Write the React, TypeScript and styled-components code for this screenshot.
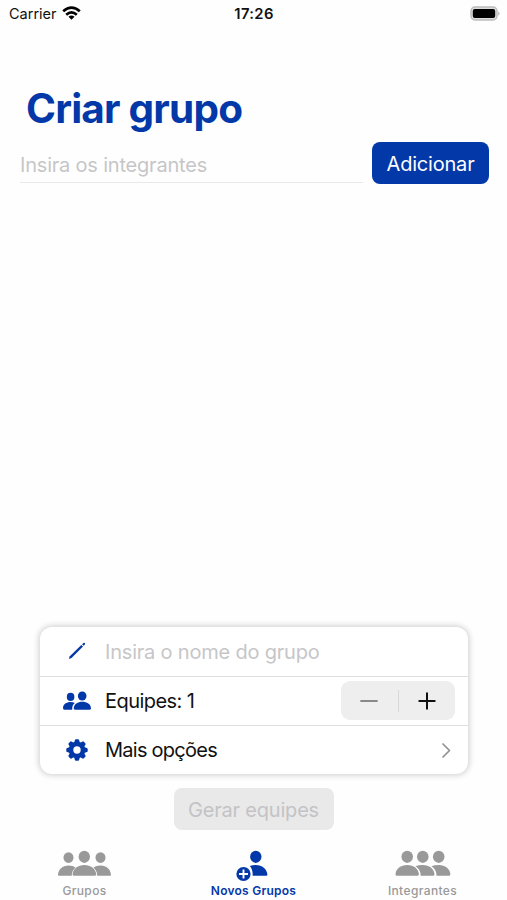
import React from "react";
import styled, { createGlobalStyle } from "styled-components";

const BLUE = "#0338a8";

const GlobalStyle = createGlobalStyle`
  * { box-sizing: border-box; }
  body { margin: 0; background: #fefefe; }
  button, input { font: inherit; letter-spacing: inherit; border: 0; padding: 0; background: none; }
`;

const Screen = styled.div`
  width: 507px;
  height: 900px;
  display: flex;
  flex-direction: column;
  overflow: hidden;
  background: #fefefe;
  color: #111;
  font-family: Inter, "Liberation Sans", sans-serif;
  font-size: 20px;
  letter-spacing: -0.2px;
`;

const StatusBar = styled.header`
  height: 27px;
  flex: none;
  display: grid;
  grid-template-columns: 1fr auto 1fr;
  align-items: center;
  padding: 0 6px 0 9px;
  font-size: 14.5px;
  letter-spacing: 0;
`;

const Carrier = styled.div`
  display: flex;
  align-items: center;
  gap: 5px;
  svg { display: block; margin-top: -2px; }
`;

const Clock = styled.div`
  font-weight: 600;
  font-size: 14.8px;
  letter-spacing: 0.35px;
  margin-right: 2px;
`;

const BatterySlot = styled.div`
  display: flex;
  justify-content: flex-end;
  svg { display: block; margin-top: -1px; }
`;

const Title = styled.h1`
  margin: 56px 0 0 26px;
  height: 52px;
  line-height: 52px;
  font-size: 40.5px;
  font-weight: 700;
  letter-spacing: -0.8px;
  color: ${BLUE};
  white-space: nowrap;
`;

const EntryRow = styled.div`
  display: flex;
  align-items: flex-start;
  gap: 9px;
  margin-top: 7px;
  padding: 0 18px 0 20px;
  height: 43px;
`;

const Field = styled.input<{ $underlined?: boolean }>`
  flex: 1;
  min-width: 0;
  height: ${(p) => (p.$underlined ? "41px" : "40px")};
  outline: none;
  line-height: 24px;
  padding-top: ${(p) => (p.$underlined ? "5px" : "0")};
  border-bottom: ${(p) => (p.$underlined ? "1px solid #e9e9eb" : "0")};
  &::placeholder { color: #c6c6c8; opacity: 1; }
`;

const ActionButton = styled.button<{ $width: number; $muted?: boolean }>`
  flex: none;
  width: ${(p) => p.$width}px;
  height: 42px;
  padding-top: 2px;
  border-radius: 8px;
  text-align: center;
  white-space: nowrap;
  background: ${(p) => (p.$muted ? "#e9e9ea" : BLUE)};
  color: ${(p) => (p.$muted ? "#c3c3c5" : "#fdfdff")};
`;

const Card = styled.section`
  margin: auto 39px 0 40px;
  border-radius: 12px;
  background: #fff;
  box-shadow: 0 0 6px 1px rgba(0, 0, 0, 0.2);
`;

const Row = styled.div`
  height: 49px;
  display: flex;
  align-items: center;
  padding-right: 13px;
  & + & { border-top: 1px solid #dedee0; }
`;

const IconSlot = styled.div`
  width: 65px;
  padding: 0 1px 1px 9px;
  display: flex;
  justify-content: center;
`;

const Label = styled.div<{ $tracking: number }>`
  flex: 1;
  white-space: nowrap;
  letter-spacing: ${(p) => p.$tracking}px;
`;

const Stepper = styled.div`
  width: 114px;
  height: 39px;
  margin-bottom: 1px;
  border-radius: 9px;
  background: #eeeeef;
  display: flex;
  align-items: center;
`;

const StepButton = styled.button`
  flex: 1;
  display: flex;
  justify-content: center;
`;

const StepDivider = styled.div`
  width: 1px;
  height: 22px;
  background: #d8d8da;
`;

const Footer = styled.div`
  display: flex;
  justify-content: center;
  height: 70px;
  padding-top: 14px;
`;

const TabBar = styled.nav`
  display: grid;
  grid-template-columns: 1fr 1fr 1fr;
  height: 56px;
`;

const Tab = styled.div<{ $active?: boolean }>`
  display: flex;
  flex-direction: column;
  align-items: center;
  padding-top: 7px;
  gap: 1px;
  font-size: 12px;
  line-height: 15px;
  letter-spacing: ${(p) => (p.$active ? "0.25px" : "0.38px")};
  font-weight: ${(p) => (p.$active ? 600 : 500)};
  color: ${(p) => (p.$active ? BLUE : "#999")};
  svg { display: block; overflow: visible; }
`;

const WifiIcon = () => (
  <svg width="19" height="14" viewBox="0 0 19 14" fill="none" stroke="#000" strokeWidth="2.7">
    <path d="M1.2 5.3Q9.5-2 17.8 5.3" />
    <path d="M4.2 8.7Q9.500 4 14.800 8.700" />
    <path d="M9.500 13.700 6.500 10.700Q9.500 8.300 12.500 10.700Z" fill="#000" stroke="none" />
  </svg>
);

const BatteryIcon = () => (
  <svg width="31" height="15" viewBox="0 0 31 15">
    <rect x="1" y="1" width="26" height="13" rx="4" fill="#ddd" stroke="#bcbcbc" strokeWidth="1.500" />
    <rect x="2.800" y="2.900" width="22.400" height="9.200" rx="2" fill="#000" />
    <path d="M28.300 5.200q2.400 2.300 0 4.600Z" fill="#aaa" />
  </svg>
);

const PencilIcon = () => (
  <svg width="18" height="18" viewBox="0 0 18 18" fill={BLUE}>
    <path d="M.800 17 1.800 14.300 13.300 2.900 15 4.600 3.500 16Z" />
    <path d="M14.100 2.200 15.400.900q.8-.5 1.400.2t.1 1.400L15.700 3.800Z" />
  </svg>
);

const PairIcon = () => (
  <svg width="28" height="20" viewBox="0 0 28 20" fill={BLUE}>
    <ellipse cx="7.600" cy="5.900" rx="3.800" ry="4.100" />
    <path d="M0 17c0-3.700 3.500-6 7.600-6 1.700 0 3 .3 4.200.9-1.800 1.400-2.800 3.200-2.600 6.800H1.300Q0 18.700 0 17Z" />
    <ellipse cx="19.200" cy="5" rx="4.300" ry="4.600" />
    <path d="M10.800 17.200c0-4 4-6.400 8.500-6.400s8.600 2.400 8.600 6.400q0 1.500-1.500 1.500H12.300Q10.800 18.700 10.800 17.200Z" />
  </svg>
);

const GearIcon = () => (
  <svg width="22" height="22" viewBox="-11 -11 22 22" fill={BLUE}>
    {[0, 45, 90, 135, 180, 225, 270, 315].map((angle) => (
      <path key={angle} transform={`rotate(${angle})`} d="M-2.900-7 -2.100-9.900Q-1.900-10.700-1-10.700H1Q1.900-10.700 2.100-9.900L2.900-7Z" />
    ))}
    <circle r="6" fill="none" stroke={BLUE} strokeWidth="4.600" />
  </svg>
);

const ChevronSvg = styled.svg`
  margin-right: 3px;
`;

const ChevronIcon = () => (
  <ChevronSvg width="12" height="17" viewBox="0 0 12 17" fill="none" stroke="#929294" strokeWidth="1.700" strokeLinecap="round" strokeLinejoin="round">
    <path d="M3 2 9.500 8.500 3 15" />
  </ChevronSvg>
);

const MinusIcon = () => (
  <svg width="18" height="18" viewBox="0 0 18 18" stroke="#89898b" strokeWidth="1.800" strokeLinecap="round">
    <path d="M1 9H17" />
  </svg>
);

const PlusIcon = () => (
  <svg width="18" height="18" viewBox="0 0 18 18" stroke="#111" strokeWidth="2" strokeLinecap="round">
    <path d="M1.300 9H16.700M9 1.300V16.700" />
  </svg>
);

const GroupIcon = () => (
  <svg width="53" height="31" viewBox="0 0 53 31" fill="#999">
    <ellipse cx="10.500" cy="6.600" rx="5" ry="5.300" />
    <path d="M0 24c.2-5.600 4.500-9.500 10.500-9.500 3 0 5.300.8 7 2.200-2.200 1.700-3.500 4.200-3.800 8H.8Q0 24.700 0 24Z" />
    <ellipse cx="42.500" cy="6.600" rx="5" ry="5.300" />
    <path d="M53 24c-.2-5.600-4.500-9.500-10.500-9.500-3 0-5.300.8-7 2.200 2.200 1.700 3.500 4.200 3.800 8h12.900q.8 0 .8-.7Z" />
    <ellipse cx="26.300" cy="5.800" rx="5.700" ry="6.100" />
    <path d="M14.600 23.300c.4-5.500 5.400-9.300 11.700-9.300s11.500 3.800 11.900 9.300q0 1.400-1.200 1.400H15.800q-1.200 0-1.200-1.400Z" stroke="#fefefe" strokeWidth="1" paintOrder="stroke" />
  </svg>
);

const AddPersonIcon = () => (
  <svg width="36" height="31" viewBox="0 0 36 31" fill={BLUE}>
    <ellipse cx="19.800" cy="5.800" rx="5.700" ry="6.100" />
    <path d="M13.800 14.900q2.600-1 6-1c6.300 0 11.100 3.900 11.600 9.500q0 1.300-1.200 1.300H16.600c.4-4-.9-7.800-2.800-9.800Z" />
    <circle cx="7.500" cy="23" r="7.100" />
    <path d="M3 23h9M7.500 18.500v9" stroke="#fff" strokeWidth="1.900" />
  </svg>
);

const MembersIcon = () => (
  <svg width="56" height="31" viewBox="0 0 56 31" fill="#999">
    <ellipse cx="12.200" cy="5.800" rx="5.800" ry="6.100" />
    <path d="M.5 23.300c.4-5.500 5.200-9.300 11.700-9.300s11.300 3.800 11.700 9.300q0 1.400-1.200 1.400h-21Q.5 24.700.5 23.300Z" />
    <ellipse cx="27.800" cy="5.800" rx="5.800" ry="6.100" />
    <path d="M20.500 15.300q3.100-1.300 7.300-1.300c6.500 0 11.300 3.800 11.700 9.300q0 1.400-1.200 1.400H25.700c.1-3.900-1.800-7.400-5.200-9.400Z" />
    <ellipse cx="43.700" cy="5.800" rx="5.800" ry="6.100" />
    <path d="M36.400 15.300q3.100-1.300 7.300-1.300c6.500 0 11.300 3.800 11.700 9.300q0 1.400-1.200 1.400H41.500c.1-3.900-1.700-7.400-5.100-9.400Z" />
  </svg>
);

export default function App() {
  return (
    <Screen>
      <GlobalStyle />
      <StatusBar>
        <Carrier>Carrier <WifiIcon /></Carrier>
        <Clock>17:26</Clock>
        <BatterySlot><BatteryIcon /></BatterySlot>
      </StatusBar>
      <Title>Criar grupo</Title>
      <EntryRow>
        <Field $underlined placeholder="Insira os integrantes" />
        <ActionButton $width={117}>Adicionar</ActionButton>
      </EntryRow>
      <Card>
        <Row>
          <IconSlot><PencilIcon /></IconSlot>
          <Field placeholder="Insira o nome do grupo" />
        </Row>
        <Row>
          <IconSlot><PairIcon /></IconSlot>
          <Label $tracking={-0.55}>Equipes: 1</Label>
          <Stepper>
            <StepButton aria-label="Diminuir"><MinusIcon /></StepButton>
            <StepDivider />
            <StepButton aria-label="Aumentar"><PlusIcon /></StepButton>
          </Stepper>
        </Row>
        <Row>
          <IconSlot><GearIcon /></IconSlot>
          <Label $tracking={-0.75}>Mais opções</Label>
          <ChevronIcon />
        </Row>
      </Card>
      <Footer>
        <ActionButton $width={160} $muted disabled>Gerar equipes</ActionButton>
      </Footer>
      <TabBar>
        <Tab><GroupIcon />Grupos</Tab>
        <Tab $active><AddPersonIcon />Novos Grupos</Tab>
        <Tab><MembersIcon />Integrantes</Tab>
      </TabBar>
    </Screen>
  );
}
